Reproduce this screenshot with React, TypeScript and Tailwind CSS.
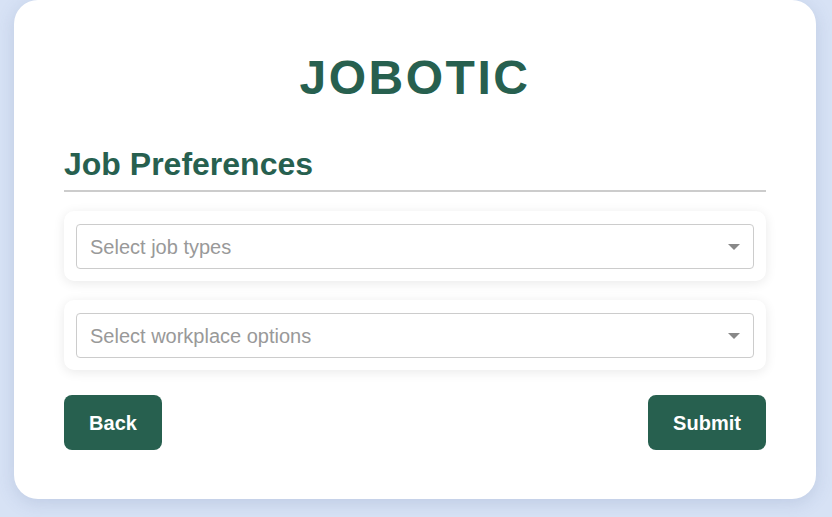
import React from 'react';

const SelectBox: React.FC<{ placeholder: string }> = ({ placeholder }) => (
  <div className="bg-white rounded-[10px] p-3 pt-[13px] shadow-[0_2px_12px_rgba(0,0,0,0.09)]">
    <div className="h-[45px] border border-[#cccccc] rounded-[4px] flex items-center justify-between pl-[13px] pr-[13px]">
      <span className="text-[20px] text-[#999999]">{placeholder}</span>
      <span className="w-0 h-0 border-l-[6px] border-r-[6px] border-t-[6px] border-l-transparent border-r-transparent border-t-[#888888]" />
    </div>
  </div>
);

export default function App() {
  return (
    <div className="min-h-screen bg-[#d7e2f5] pl-[14px] pr-[16px] pb-[18px] font-['Liberation_Sans',Arial,sans-serif]">
      <div className="bg-white rounded-[24px] pt-[50px] pb-[49px] px-[50px] shadow-[0_4px_18px_rgba(80,100,150,0.18)]">
        <h1 className="text-center text-[48px] leading-[56px] font-bold tracking-[2.5px] text-[#27604f]">JOBOTIC</h1>
        <h2 className="mt-[38px] text-[32px] leading-[40px] font-bold text-[#27604f] pb-[6px] border-b-2 border-[#cccccc]">
          Job Preferences
        </h2>
        <div className="mt-[19px] flex flex-col gap-[19px]">
          <SelectBox placeholder="Select job types" />
          <SelectBox placeholder="Select workplace options" />
        </div>
        <div className="mt-[25px] flex justify-between">
          <button className="h-[55px] w-[98px] rounded-[8px] bg-[#27604f] text-white text-[20px] font-bold">Back</button>
          <button className="h-[55px] w-[118px] rounded-[8px] bg-[#27604f] text-white text-[20px] font-bold">Submit</button>
        </div>
      </div>
    </div>
  );
}
